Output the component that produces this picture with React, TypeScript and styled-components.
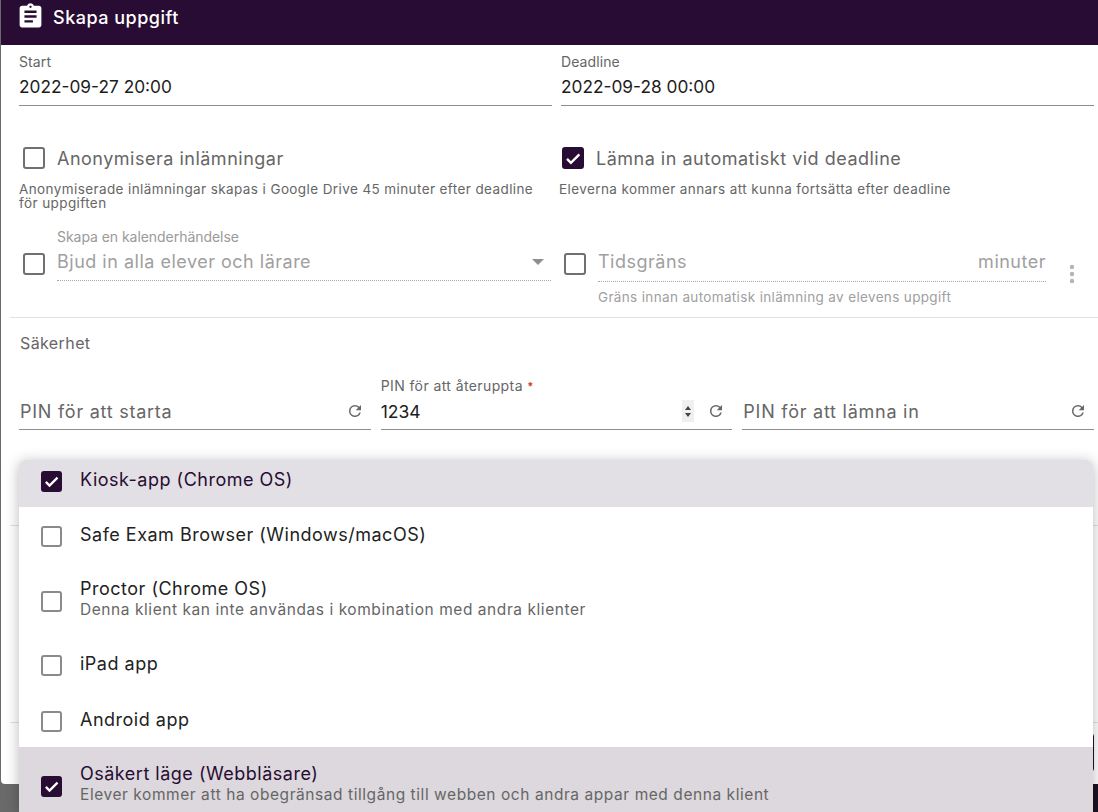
import React from 'react';
import styled, { createGlobalStyle } from 'styled-components';

const FONT = `'Inter', 'Noto Sans', sans-serif`;
const PURPLE = '#280c33';

const GlobalStyle = createGlobalStyle`
  html, body {
    margin: 0;
    height: 100%;
    overflow: hidden;
    background: #6a6a6a;
    font-family: ${FONT};
  }
`;

const Page = styled.div`
  position: relative;
  width: 1098px;
  height: 812px;
  overflow: hidden;
  background: linear-gradient(90deg, #6a6a6a 0, #6a6a6a 1093px, #1c1222 1093px);
`;

const Dialog = styled.div`
  margin-left: 1px;
  width: 1097px;
  height: 784px;
  background: #fff;
  border-bottom-left-radius: 4px;
  display: flex;
  flex-direction: column;
`;

const Header = styled.div`
  height: 45px;
  flex: none;
  background: ${PURPLE};
  color: #fff;
  display: flex;
  align-items: flex-start;
  gap: 8px;
  padding: 2px 0 0 15px;
  box-sizing: border-box;
  font-size: 18px;
  font-weight: 500;
  letter-spacing: 0.5px;
  line-height: 32px;
`;

const Body = styled.div`
  flex: 1;
  display: flex;
  flex-direction: column;
`;

const TwoCols = styled.div`
  display: grid;
  grid-template-columns: 533px 533px;
  column-gap: 9px;
  padding-left: 18px;
`;

const Field = styled.div`
  border-bottom: 1px solid #8d8d8d;
  height: 53px;
  margin-top: 8px;
  padding-top: 1px;
  box-sizing: border-box;
`;

const SmallLabel = styled.div<{ $muted?: boolean }>`
  font-size: 14px;
  line-height: 16px;
  letter-spacing: ${(p) => (p.$muted ? '-0.05px' : '0.1px')};
  color: ${(p) => (p.$muted ? '#9a9a9a' : '#666')};
`;

const PinLabel = styled(SmallLabel)`
  letter-spacing: 0.4px;
`;

const Value = styled.div`
  font-size: 17.3px;
  line-height: 26px;
  margin-top: 4px;
  color: #1c1c1c;
`;

const CheckLine = styled.div<{ $shift?: boolean }>`
  display: flex;
  align-items: center;
  gap: 12px;
  height: 26px;
  padding-left: ${(p) => (p.$shift ? '1px' : '4px')};
  font-size: 18px;
  letter-spacing: 0.5px;
  color: #666;
`;

const Box = styled.span<{ $checked?: boolean }>`
  flex: none;
  width: 22px;
  height: 22px;
  box-sizing: border-box;
  border-radius: 3px;
  border: 2px solid ${(p) => (p.$checked ? PURPLE : '#707070')};
  background: ${(p) => (p.$checked ? PURPLE : 'transparent')};
  display: inline-flex;
  align-items: center;
  justify-content: center;
`;

const MenuBox = styled(Box)`
  width: 21px;
  height: 21px;
  margin-top: 3px;
  border-color: ${(p) => (p.$checked ? PURPLE : '#8a8a8a')};
`;

const Help = styled.div<{ $shift?: boolean }>`
  font-size: 13.5px;
  line-height: 14px;
  letter-spacing: 0.4px;
  color: #666;
  margin-top: 11px;
  margin-left: ${(p) => (p.$shift ? '-2px' : '0')};
`;

const OptionCol = styled.div`
  margin-top: 39px;
  height: 65px;
`;

const DisabledRow = styled.div`
  display: grid;
  grid-template-columns: 541px 482px 1fr;
  padding-left: 22px;
  margin-top: 16px;
  height: 91px;
`;

const DisabledInner = styled.div`
  flex: 1;
`;

const DisabledInput = styled.div<{ $tall?: boolean }>`
  display: flex;
  align-items: center;
  justify-content: space-between;
  font-size: 18px;
  letter-spacing: 0.5px;
  color: #a0a0a0;
  border-bottom: 1px dotted #a8a8a8;
  box-sizing: border-box;
  margin-top: ${(p) => (p.$tall ? '1px' : '3px')};
  padding-bottom: ${(p) => (p.$tall ? '7px' : '5px')};
  height: ${(p) => (p.$tall ? '34px' : '33px')};
`;

const SelectCell = styled.div`
  display: flex;
  align-items: flex-start;
  gap: 12px;
  padding: 3px 13px 0 0;
  > span { margin-top: 24px; }
`;

const LimitCell = styled.div`
  display: flex;
  align-items: flex-start;
  gap: 12px;
  padding-top: 21px;
  > span { margin-top: 6px; }
`;

const MoreCell = styled.div`
  display: flex;
  justify-content: center;
  padding-top: 36px;
`;

const Caret = styled.span`
  margin-right: 7px;
  display: inline-flex;
`;

const Hint = styled.div`
  font-size: 13.5px;
  line-height: 14px;
  letter-spacing: 0.35px;
  margin-top: 8px;
  color: #a0a0a0;
`;

const Divider = styled.div`
  height: 1px;
  margin-left: 9px;
  background: #e2e2e2;
  flex: none;
`;

const SectionTitle = styled.div`
  font-size: 16px;
  line-height: 20px;
  letter-spacing: 0.4px;
  color: #666;
  padding: 15px 0 0 19px;
`;

const PinRow = styled.div`
  display: grid;
  grid-template-columns: repeat(3, 1fr);
  column-gap: 10px;
  padding: 0 4px 0 18px;
  margin-top: 23px;
`;

const PinField = styled.div`
  height: 54px;
  box-sizing: border-box;
  border-bottom: 1px solid #8d8d8d;
  padding-top: 2px;
`;

const PinLine = styled.div<{ $filled?: boolean }>`
  display: flex;
  align-items: center;
  margin-top: ${(p) => (p.$filled ? '4px' : '20px')};
  height: 26px;
  padding: 0 7px 0 ${(p) => (p.$filled ? '0' : '1px')};
  font-size: ${(p) => (p.$filled ? '17.5px' : '18px')};
  letter-spacing: ${(p) => (p.$filled ? '0' : '0.75px')};
  color: ${(p) => (p.$filled ? '#1c1c1c' : '#666')};
`;

const PinText = styled.span`
  flex: 1;
`;

const Required = styled.span`
  color: #c8401a;
  font-size: 11px;
  font-weight: 700;
  vertical-align: 1px;
`;

const Spinner = styled.span`
  width: 12px;
  height: 22px;
  background: #f0f0f0;
  margin-right: 13px;
  display: inline-flex;
  flex-direction: column;
  align-items: center;
  justify-content: center;
  gap: 3px;
`;

const SpinUp = styled.i`
  border: 3px solid transparent;
  border-top: 0;
  border-bottom: 4px solid #444;
`;

const SpinDown = styled.i`
  border: 3px solid transparent;
  border-bottom: 0;
  border-top: 4px solid #444;
`;

const LowerSection = styled.div`
  margin-top: 95px;
`;

const Footer = styled.div`
  flex: 1;
  display: flex;
  justify-content: flex-end;
  padding: 10px 4px 0 0;
`;

const SubmitButton = styled.div`
  width: 120px;
  height: 39px;
  border-radius: 4px;
  background: ${PURPLE};
`;

const Spacer = styled.div`
  height: 196px;
`;

/* dropdown list lying over the form */
const Menu = styled.div`
  position: absolute;
  left: 19px;
  top: 460px;
  width: 1074px;
  height: 352px;
  overflow: hidden;
  background: #fff;
  border-top-left-radius: 6px;
  border-top-right-radius: 6px;
  box-shadow: 0 2px 14px rgba(0, 0, 0, 0.28);
`;

const MenuItem = styled.div<{ $selected?: boolean; $h: number; $dark?: boolean; $pad?: number }>`
  height: ${(p) => p.$h}px;
  flex: none;
  box-sizing: border-box;
  padding: 0 0 ${(p) => p.$pad ?? 0}px 22px;
  display: flex;
  align-items: center;
  gap: 18px;
  background: ${(p) => (p.$selected ? (p.$dark ? '#dcd8dd' : '#e2e0e5') : '#fff')};
  color: ${(p) => (p.$selected ? PURPLE : '#222')};
`;

const ItemText = styled.div`
  display: flex;
  flex-direction: column;
`;

const ItemTitle = styled.div`
  font-size: 18px;
  line-height: 20px;
  letter-spacing: 0.5px;
`;

const ItemSub = styled.div`
  font-size: 15.5px;
  line-height: 21px;
  letter-spacing: 0.56px;
  color: #666;
`;

const Tick = () => (
  <svg width="19" height="19" viewBox="0 0 24 24" fill="none">
    <path d="M4 12.5l5.2 5.2L20.5 6.5" stroke="#fff" strokeWidth="3.2" />
  </svg>
);

const ClipboardIcon = () => (
  <svg width="29" height="29" viewBox="0 0 24 24" fill="#fff">
    <path d="M19 3h-4.18C14.4 1.84 13.3 1 12 1s-2.4.84-2.82 2H5c-1.1 0-2 .9-2 2v14c0 1.1.9 2 2 2h14c1.1 0 2-.9 2-2V5c0-1.1-.9-2-2-2zm-7 0c.55 0 1 .45 1 1s-.45 1-1 1-1-.45-1-1 .45-1 1-1zm2 14H7v-2h7v2zm3-4H7v-2h10v2zm0-4H7V7h10v2z" />
  </svg>
);

const RefreshIcon = () => (
  <svg width="18" height="18" viewBox="0 0 24 24" fill="#666">
    <path d="M17.65 6.35A7.95 7.95 0 0 0 12 4a8 8 0 1 0 7.73 10h-2.08A6 6 0 1 1 12 6c1.66 0 3.14.69 4.22 1.78L13 11h7V4l-2.35 2.35z" />
  </svg>
);

const MoreIcon = () => (
  <svg width="24" height="24" viewBox="0 0 24 24" fill="#b4b4b4">
    <circle cx="12" cy="5" r="2.2" />
    <circle cx="12" cy="12" r="2.2" />
    <circle cx="12" cy="19" r="2.2" />
  </svg>
);

const CaretIcon = () => (
  <svg width="12" height="6" viewBox="0 0 12 6" fill="#8f8f8f">
    <path d="M0 0h12L6 6z" />
  </svg>
);

const items = [
  { title: 'Kiosk-app (Chrome OS)', selected: true, h: 47, pad: 8 },
  { title: 'Safe Exam Browser (Windows/macOS)', h: 56 },
  { title: 'Proctor (Chrome OS)', sub: 'Denna klient kan inte användas i kombination med andra klienter', h: 73 },
  { title: 'iPad app', h: 56 },
  { title: 'Android app', h: 55 },
  {
    title: 'Osäkert läge (Webbläsare)',
    sub: 'Elever kommer att ha obegränsad tillgång till webben och andra appar med denna klient',
    selected: true,
    dark: true,
    h: 75,
  },
];

const App: React.FunctionComponent = () => (
  <Page>
    <GlobalStyle />
    <Dialog>
      <Header>
        <ClipboardIcon />
        Skapa uppgift
      </Header>
      <Body>
        <TwoCols>
          <Field>
            <SmallLabel>Start</SmallLabel>
            <Value>2022-09-27 20:00</Value>
          </Field>
          <Field>
            <SmallLabel>Deadline</SmallLabel>
            <Value>2022-09-28 00:00</Value>
          </Field>
          <OptionCol>
            <CheckLine>
              <Box />
              Anonymisera inlämningar
            </CheckLine>
            <Help>
              Anonymiserade inlämningar skapas i Google Drive 45 minuter efter deadline
              <br />
              för uppgiften
            </Help>
          </OptionCol>
          <OptionCol>
            <CheckLine $shift>
              <Box $checked>
                <Tick />
              </Box>
              Lämna in automatiskt vid deadline
            </CheckLine>
            <Help $shift>Eleverna kommer annars att kunna fortsätta efter deadline</Help>
          </OptionCol>
        </TwoCols>
        <DisabledRow>
          <SelectCell>
            <Box />
            <DisabledInner>
              <SmallLabel $muted>Skapa en kalenderhändelse</SmallLabel>
              <DisabledInput>
                Bjud in alla elever och lärare
                <Caret>
                  <CaretIcon />
                </Caret>
              </DisabledInput>
            </DisabledInner>
          </SelectCell>
          <LimitCell>
            <Box />
            <DisabledInner>
              <DisabledInput $tall>
                Tidsgräns
                <span>minuter</span>
              </DisabledInput>
              <Hint>Gräns innan automatisk inlämning av elevens uppgift</Hint>
            </DisabledInner>
          </LimitCell>
          <MoreCell>
            <MoreIcon />
          </MoreCell>
        </DisabledRow>
        <Divider />
        <SectionTitle>Säkerhet</SectionTitle>
        <PinRow>
          <PinField>
            <PinLine>
              <PinText>PIN för att starta</PinText>
              <RefreshIcon />
            </PinLine>
          </PinField>
          <PinField>
            <PinLabel>
              PIN för att återuppta <Required>*</Required>
            </PinLabel>
            <PinLine $filled>
              <PinText>1234</PinText>
              <Spinner>
                <SpinUp />
                <SpinDown />
              </Spinner>
              <RefreshIcon />
            </PinLine>
          </PinField>
          <PinField>
            <PinLine>
              <PinText>PIN för att lämna in</PinText>
              <RefreshIcon />
            </PinLine>
          </PinField>
        </PinRow>
        <LowerSection>
          <Divider />
          <Spacer />
          <Divider />
        </LowerSection>
        <Footer>
          <SubmitButton />
        </Footer>
      </Body>
    </Dialog>
    <Menu>
      {items.map((item) => (
        <MenuItem key={item.title} $selected={item.selected} $dark={item.dark} $h={item.h} $pad={item.pad}>
          <MenuBox $checked={item.selected}>{item.selected && <Tick />}</MenuBox>
          <ItemText>
            <ItemTitle>{item.title}</ItemTitle>
            {item.sub && <ItemSub>{item.sub}</ItemSub>}
          </ItemText>
        </MenuItem>
      ))}
    </Menu>
  </Page>
);

export default App;
